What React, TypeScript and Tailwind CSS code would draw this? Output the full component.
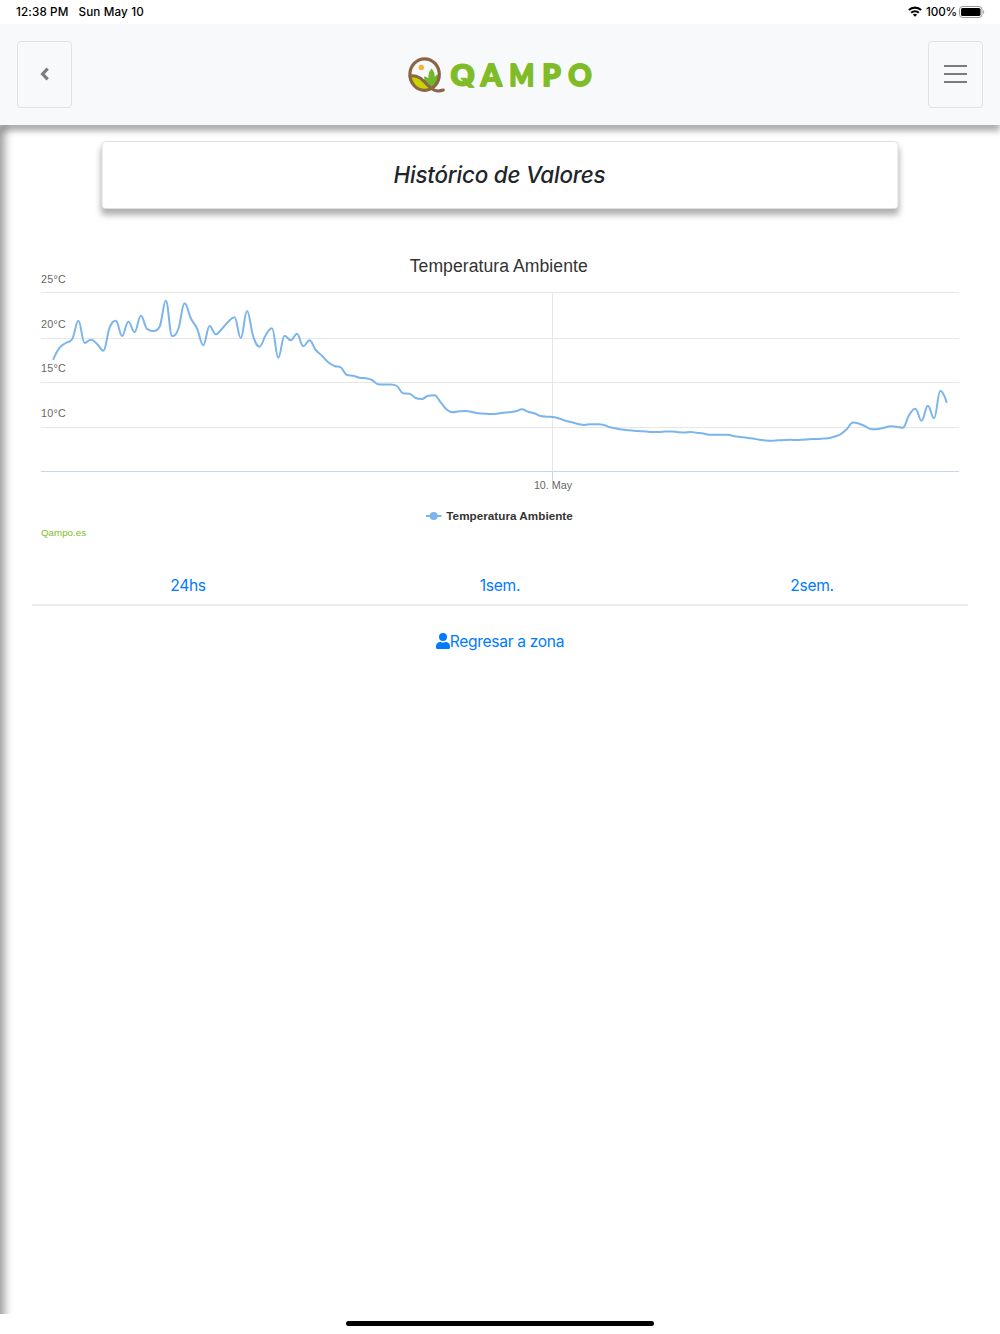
import React from "react";

const FIRST_X = 53.4;
const STEP = 6.246;

const LEVELS = [
  359, 347.7, 343, 339.3, 320.7, 343, 339.7, 344, 350.7, 327.7, 320.7, 336, 321.7, 332, 315.7, 329,
  331, 326.7, 300.7, 336, 329, 303.3, 318.3, 328.7, 345.3, 326, 334.3, 328.7, 321.7, 317.3, 338, 311,
  336.7, 346.7, 335, 328.3, 357.7, 335.7, 340.3, 333.7, 346.3, 340.3, 350, 355.7, 362.3, 366, 367.3,
  375, 375.7, 377.7, 378.3, 380, 384.3, 384.5, 384.5, 386, 393.3, 393.7, 398, 399, 395.7, 395.3,
  402.3, 409.7, 412.3, 411.3, 411, 412, 413.3, 413.7, 414, 413.7, 412.7, 412.3, 411.3, 409.3, 411.7,
  413.3, 416, 416.7, 417, 418.5, 420.7, 422.3, 424, 425, 424.2, 424.3, 424.7, 427, 428.3, 429.5,
  430.2, 430.8, 431.2, 431.6, 431.9, 432, 431.5, 431.5, 432.2, 432.6, 431.9, 432.8, 433.4, 434.7,
  434.8, 434.8, 434.8, 436.2, 437, 437.7, 438.6, 439.7, 440.4, 440.7, 440.3, 440, 439.8, 440, 439.7,
  439.3, 439, 438.7, 438.3, 436.7, 434.3, 429.3, 422.5, 423.7, 426.3, 429.3, 429, 427.7, 426.3,
  426.7, 427.7, 415, 408.7, 420.7, 405.7, 418.3, 390.8, 402,
];

// Smooth line whose control points never overshoot a local extreme.
function splinePath(levels: number[]): string {
  const pts = levels.map((y, i) => ({ x: FIRST_X + i * STEP, y }));
  let d = `M${pts[0].x} ${pts[0].y}`;
  let outX = pts[0].x;
  let outY = pts[0].y;
  for (let i = 1; i < pts.length; i++) {
    const p = pts[i];
    const prev = pts[i - 1];
    const next = pts[i + 1];
    let inX = p.x;
    let inY = p.y;
    let nextOutX = p.x;
    let nextOutY = p.y;
    if (next) {
      inX = (1.5 * p.x + prev.x) / 2.5;
      inY = (1.5 * p.y + prev.y) / 2.5;
      nextOutX = (1.5 * p.x + next.x) / 2.5;
      nextOutY = (1.5 * p.y + next.y) / 2.5;
      const shift = ((nextOutY - inY) * (nextOutX - p.x)) / (nextOutX - inX) + p.y - nextOutY;
      inY += shift;
      nextOutY += shift;
      const hiPrev = Math.max(prev.y, p.y);
      const loPrev = Math.min(prev.y, p.y);
      if (inY > hiPrev) {
        inY = hiPrev;
        nextOutY = 2 * p.y - inY;
      } else if (inY < loPrev) {
        inY = loPrev;
        nextOutY = 2 * p.y - inY;
      }
      const hiNext = Math.max(next.y, p.y);
      const loNext = Math.min(next.y, p.y);
      if (nextOutY > hiNext) {
        nextOutY = hiNext;
        inY = 2 * p.y - nextOutY;
      } else if (nextOutY < loNext) {
        nextOutY = loNext;
        inY = 2 * p.y - nextOutY;
      }
    }
    d += `C${outX.toFixed(2)} ${outY.toFixed(2)} ${inX.toFixed(2)} ${inY.toFixed(2)} ${p.x.toFixed(2)} ${p.y}`;
    outX = nextOutX;
    outY = nextOutY;
  }
  return d;
}

function StatusBar() {
  return (
    <div className="flex h-6 items-center justify-between bg-white pl-4 pr-[15px] text-[11.7px] font-medium text-black">
      <div className="flex gap-[10px] pt-px tracking-[0.12px]">
        <span>12:38 PM</span>
        <span>Sun May 10</span>
      </div>
      <div className="flex items-center">
        <svg width="14" height="11" viewBox="0 0 14 11" fill="none" stroke="#000" strokeWidth="2.1" className="mr-1">
          <path d="M0.9 4.1a8.7 8.7 0 0 1 12.2 0" />
          <path d="M3.2 6.8a5.4 5.4 0 0 1 7.6 0" />
          <path d="M7 10.8 4.9 8.7a3 3 0 0 1 4.2 0z" fill="#000" stroke="none" />
        </svg>
        <span className="pt-px tracking-[-0.15px]">100%</span>
        <svg width="26" height="12" viewBox="0 0 26 12" className="ml-[2px]">
          <rect x="0.5" y="0.5" width="22.5" height="11" rx="3" fill="none" stroke="#999" />
          <rect x="2" y="2" width="19.5" height="8" rx="1.6" fill="#000" />
          <path d="M24.2 4v4c1.3-.6 1.3-3.4 0-4z" fill="#999" />
        </svg>
      </div>
    </div>
  );
}

function Logo() {
  return (
    <svg width="190" height="44" viewBox="405 53 190 44" role="img" aria-label="QAMPO">
      <clipPath id="ring">
        <ellipse cx="424.6" cy="74.6" rx="15" ry="16" />
      </clipPath>
      <g clipPath="url(#ring)">
        <path d="M408 75c7-1 12 2 17 8l8 8-8 2h-17z" fill="#c8d400" />
        <path d="M430 88c-3.500-3-6-6.500-6-11.500 2.200 0 3.700 1 4.500 2-.5-4 .5-7 3-10 2.500 2.500 3.500 5.500 3 8.500 1.500-2 3-2.500 5-2.500 0 6-2 12-5 14z" fill="#72b62b" />
      </g>
      <circle cx="421.300" cy="67.400" r="2.700" fill="#f9b233" />
      <ellipse cx="424.600" cy="74.600" rx="14.700" ry="15.800" fill="none" stroke="#8b6544" strokeWidth="3.200" />
      <path d="M410 76c8-1 12 3 17 8.500 5 5 9 8 16.300 5.500" fill="none" stroke="#8b6544" strokeWidth="3" strokeLinecap="round" />
      <g fill="#80bc28" stroke="#80bc28" strokeWidth="1.8" strokeLinejoin="round" fontFamily="Lato, sans-serif" fontWeight="900" fontSize="29.500">
        <text x="449.800" y="85.500" fontFamily="Inter, sans-serif" fontWeight="800" fontSize="29.500" strokeWidth="0.8" textLength="26" lengthAdjust="spacingAndGlyphs">Q</text>
        <text x="480.800" y="85.500" textLength="21" lengthAdjust="spacingAndGlyphs">A</text>
        <text x="509.300" y="85.500" textLength="25" lengthAdjust="spacingAndGlyphs">M</text>
        <text x="542.300" y="85.500">P</text>
        <text x="568.200" y="85.500" textLength="23.500" lengthAdjust="spacingAndGlyphs">O</text>
      </g>
    </svg>
  );
}

function Header() {
  return (
    <header className="relative z-10 flex h-[101px] items-start justify-between bg-[#f8f9fa] px-[17px] pt-[17px] shadow-[0_6px_6px_rgba(0,0,0,0.32)]">
      <button aria-label="Volver" className="flex h-[67px] w-[55px] items-center justify-center rounded border border-[#e1e2e3] pb-px">
        <svg width="12" height="16" viewBox="0 0 12 16" fill="none" stroke="#7b7c7d" strokeWidth="3.2">
          <path d="M8.700 2.700 3.600 8l5.100 5.300" />
        </svg>
      </button>
      <div className="mt-3">
        <Logo />
      </div>
      <button aria-label="Menú" className="flex h-[67px] w-[55px] flex-col items-center justify-center gap-[6px] rounded border border-[#e1e2e3] pb-px">
        <span className="h-[2px] w-[23px] bg-[#7b7c7d]" />
        <span className="h-[2px] w-[23px] bg-[#7b7c7d]" />
        <span className="h-[2px] w-[23px] bg-[#7b7c7d]" />
      </button>
    </header>
  );
}

function Chart() {
  return (
    <svg width="936" height="304" viewBox="32 241 936 304" className="mx-auto mt-8 block" fontFamily="'Liberation Sans', Arial, sans-serif">
      <text x="498.700" y="271.500" textAnchor="middle" fontSize="17.600" fill="#333" textLength="178">Temperatura Ambiente</text>
      <g stroke="#e6e6e6">
        <path d="M41 292.500H959M41 338.500H959M41 382.500H959M41 427.500H959M552.500 292V471" />
      </g>
      <path d="M41 471.500H959M552.500 471V481" stroke="#ccd6eb" />
      <path d={splinePath(LEVELS)} fill="none" stroke="#7cb5ec" strokeWidth="2" strokeLinejoin="round" strokeLinecap="round" />
      <g fontSize="10.750" fill="#666">
        <text x="41" y="283.400" textLength="24.800">25°C</text>
        <text x="41" y="328.400" textLength="24.800">20°C</text>
        <text x="41" y="372.400" textLength="24.800">15°C</text>
        <text x="41" y="417.400" textLength="24.800">10°C</text>
        <text x="553" y="489.400" textAnchor="middle">10. May</text>
      </g>
      <path d="M426 516H441.500" stroke="#7cb5ec" strokeWidth="2" />
      <circle cx="433.700" cy="516" r="4" fill="#7cb5ec" />
      <text x="446.300" y="519.500" fontSize="11.700" fontWeight="700" fill="#333" textLength="126.500">Temperatura Ambiente</text>
      <text x="41" y="536" fontSize="9.750" fill="#80bc28" textLength="45">Qampo.es</text>
    </svg>
  );
}

export default function App() {
  return (
    <div className="flex h-[1334px] w-[1000px] flex-col bg-white font-['Inter',sans-serif]">
      <StatusBar />
      <Header />
      <main className="relative h-[1189px] overflow-hidden">
        <div className="absolute -bottom-5 -left-10 top-0 w-10 shadow-[5px_0_8px_rgba(0,0,0,0.37)]" />
        <h1 className="mx-auto mt-4 flex h-[68px] w-[797px] -translate-x-[0.5px] items-center justify-center rounded border border-[#dfdfdf] bg-white text-[22.4px] font-medium italic tracking-[-0.22px] text-[#212529] shadow-[0_6px_6px_rgba(0,0,0,0.32)]">
          Histórico de Valores
        </h1>
        <Chart />
        <nav className="mx-8 grid h-[61px] grid-cols-3 items-end border-b-2 border-[#ededed] pb-1.5 text-center text-[15.6px] leading-6 tracking-[-0.3px] text-[#007bff]">
          <a>24hs</a>
          <a>1sem.</a>
          <a>2sem.</a>
        </nav>
        <a className="mt-6 flex items-center justify-center text-[15.6px] leading-6 tracking-[-0.33px] text-[#007bff]">
          <svg width="14" height="16" viewBox="0 0 448 512" fill="currentColor" className="mb-0.5">
            <path d="M224 256a128 128 0 1 0 0-256 128 128 0 0 0 0 256zm90 32h-17a174 174 0 0 1-146 0h-17A134 134 0 0 0 0 422v42a48 48 0 0 0 48 48h352a48 48 0 0 0 48-48v-42a134 134 0 0 0-134-134z" />
          </svg>
          <span>Regresar a zona</span>
        </a>
      </main>
      <footer className="flex flex-1 items-center justify-center pb-px">
        <div className="h-[5px] w-[308px] rounded-full bg-black" />
      </footer>
    </div>
  );
}
